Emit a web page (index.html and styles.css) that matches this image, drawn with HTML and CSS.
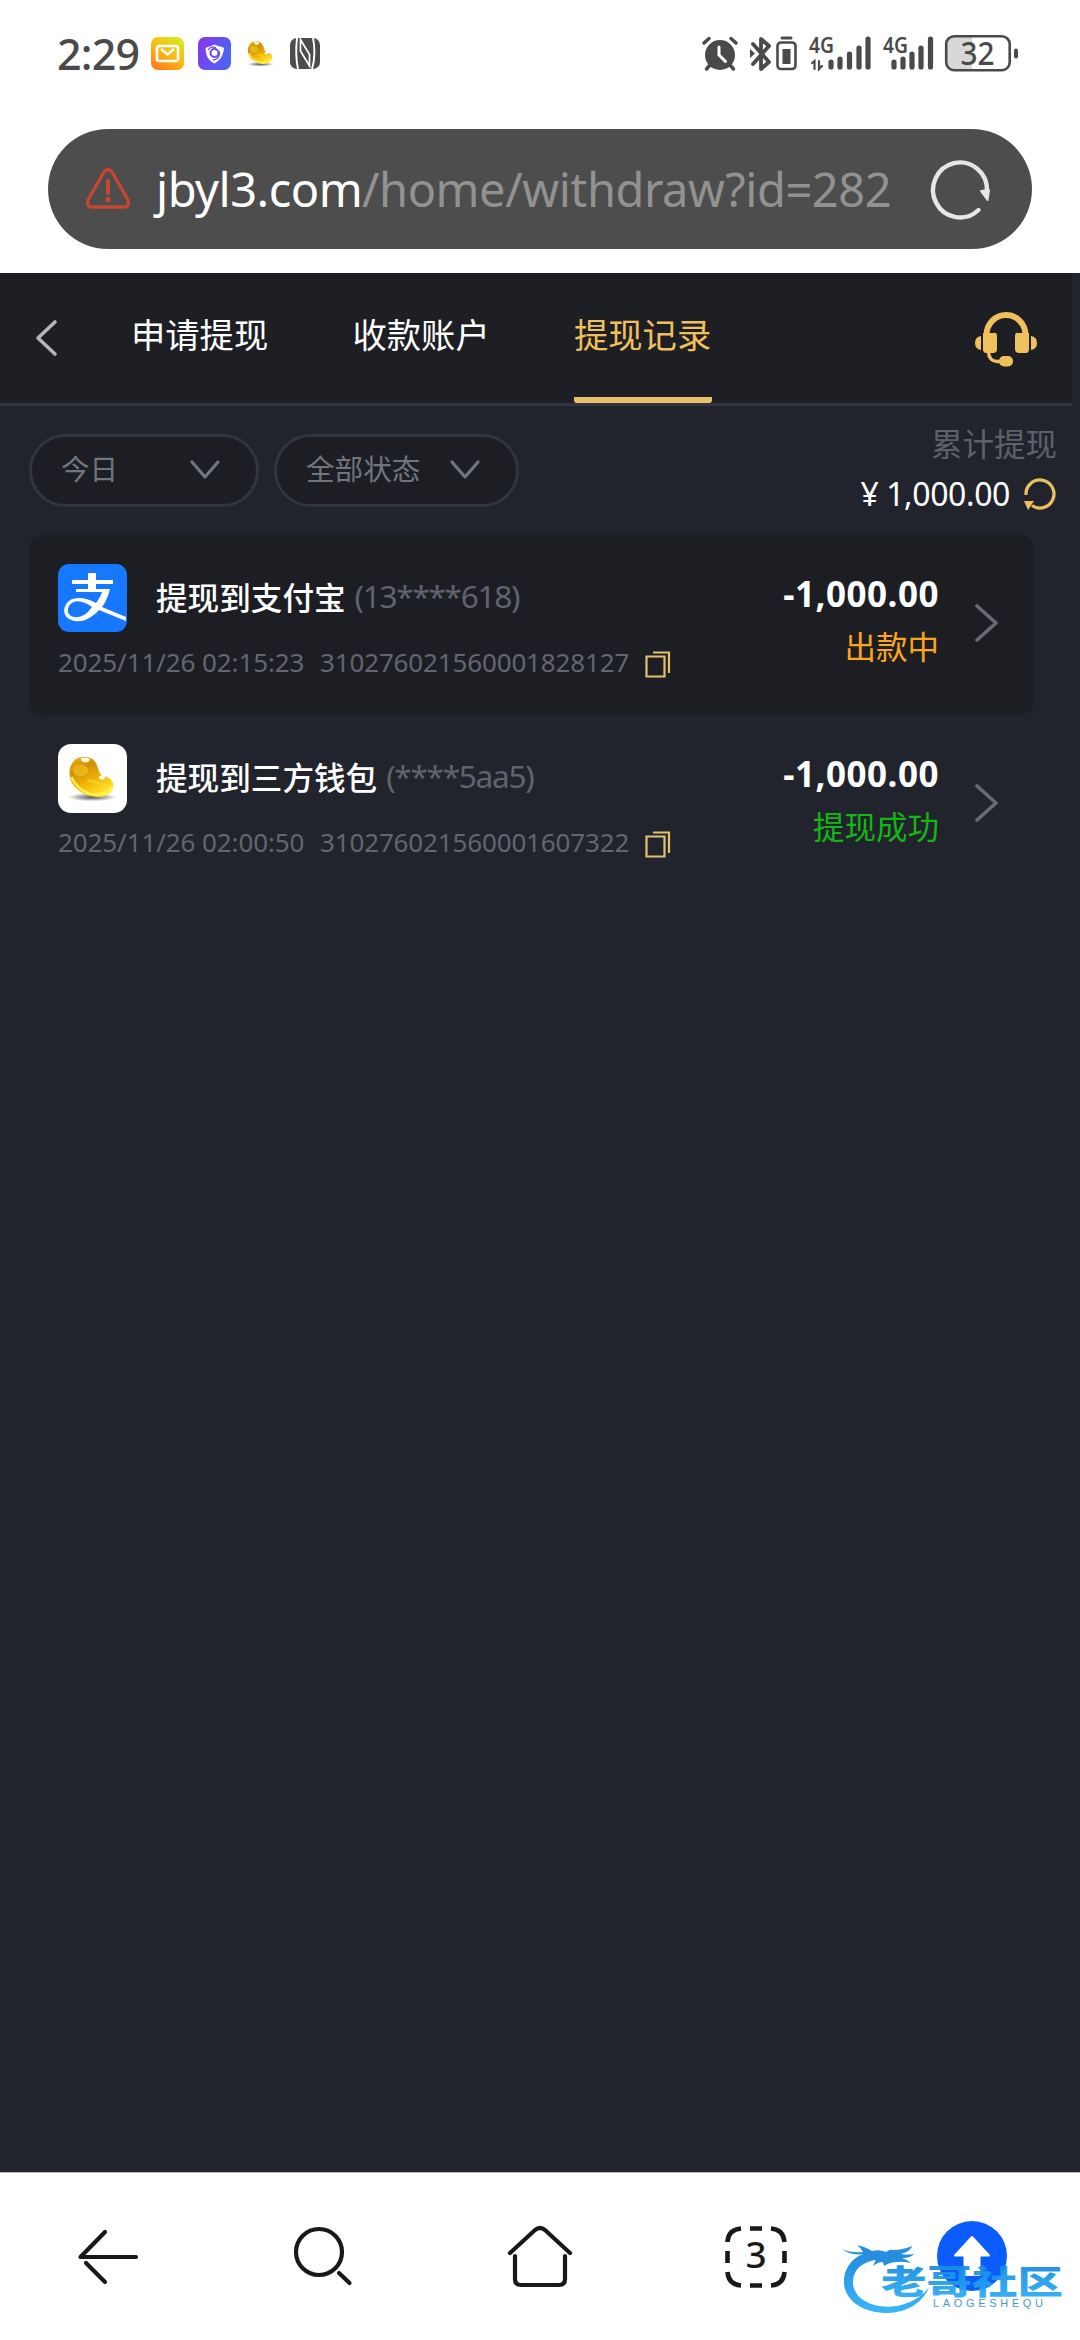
FILE: index.html
```html
<!DOCTYPE html>
<html lang="zh-CN">
<head>
<meta charset="utf-8">
<title>提现记录</title>
<link rel="stylesheet" href="styles.css">
</head>
<body>
<svg width="0" height="0" class="defs">
  <defs>
    <linearGradient id="gMail" x1="0.2" y1="1" x2="0.8" y2="0"><stop offset="0" stop-color="#ff7d1c"/><stop offset=".5" stop-color="#fdb913"/><stop offset="1" stop-color="#d8e821"/></linearGradient>
    <linearGradient id="gShield" x1="0" y1="0" x2="1" y2="0.4"><stop offset="0" stop-color="#8a35ea"/><stop offset="1" stop-color="#4b64f2"/></linearGradient>
    <linearGradient id="gBean" x1="0.1" y1="0" x2="0.6" y2="1"><stop offset="0" stop-color="#e9b012"/><stop offset=".3" stop-color="#cf9208"/><stop offset=".6" stop-color="#eeae06"/><stop offset="1" stop-color="#ffe92a"/></linearGradient>
    <linearGradient id="gMark" x1="0" y1="0" x2="0" y2="1"><stop offset="0" stop-color="#1283dc"/><stop offset="1" stop-color="#2bb0fa"/></linearGradient>
    <radialGradient id="gShadow"><stop offset="0" stop-color="#555"/><stop offset=".6" stop-color="#999" stop-opacity=".7"/><stop offset="1" stop-color="#ccc" stop-opacity="0"/></radialGradient>
    <symbol id="bean" viewBox="0 0 52 48">
      <ellipse cx="25" cy="43" rx="26" ry="4.500" fill="url(#gShadow)"/>
      <path d="M4 8C7 2 12 1 18 1C26 1 29 6 31 12C32 17 34 20 38 21.500C45 23 48 27 47 33C45 40 36 43.500 28 42.500C14 41 1.500 31 1.500 18C1.500 13 2 11 4 8Z" fill="url(#gBean)"/>
      <path d="M3.500 22C8 33 19 40 29 40C38 40 44 37 45.500 32" fill="none" stroke="#fff04a" stroke-width="2.600"/>
      <path d="M13 2.500C14 8 22 8 23 3C20 1.500 16 1.500 13 2.500Z" fill="#fffbd8"/>
      <ellipse cx="13" cy="15" rx="8" ry="6" fill="#f6c724" opacity=".6"/>
      <ellipse cx="35.500" cy="22.500" rx="3" ry="2.300" fill="#fffbe0"/>
      <path d="M20 26C27 24 31 31 41 30" fill="none" stroke="#ffd534" stroke-width="3" opacity=".6"/>
    </symbol>
    <symbol id="copy" viewBox="0 0 26 27"><path d="M1.500 5.500H19.500V25.500H1.500ZM8 1.500H24V22" fill="none" stroke="#e3bf6e" stroke-width="2.200"/></symbol>
    <symbol id="more" viewBox="0 0 24 40"><path d="M2 3L21 20L2 37" fill="none" stroke="#696b73" stroke-width="3.600" stroke-linecap="round" stroke-linejoin="round"/></symbol>
    <symbol id="down" viewBox="0 0 32 22"><path d="M3 3L16 18L29 3" fill="none" stroke="#71767e" stroke-width="3.200" stroke-linecap="round" stroke-linejoin="round"/></symbol>
  </defs>
</svg>

<header class="status">
  <span class="clock">2:29</span>
  <svg class="apps" width="172" height="36" viewBox="150 36 172 36">
    <rect x="151" y="37" width="33" height="33" rx="7" fill="url(#gMail)"/>
    <rect x="157" y="46" width="21" height="15" rx="2.500" fill="none" stroke="#fff" stroke-width="2.600"/><path d="M161 49L167.500 54.500L174 49" fill="none" stroke="#fff" stroke-width="2.400"/>
    <rect x="198" y="37" width="33" height="33" rx="7" fill="url(#gShield)"/>
    <path d="M214.500 44.500C219 47 222 46 224 48C223 57 220 60 214.500 63.500C208 60 206 56 205.500 48C209 46 210 47 214.500 44.500Z" fill="#fff"/><circle cx="214.500" cy="53" r="4" fill="none" stroke="#6e4aee" stroke-width="2"/><path d="M208 50C210 46 215 47 216 48M219 51C221 57 216 60 213 60" stroke="#6e4aee" fill="none" stroke-width="1.300"/>
    <use href="#bean" x="247" y="41" width="28" height="26"/>
    <rect x="290" y="38" width="30" height="31" rx="7" fill="#4c4c4c"/>
    <path d="M297 38C296 47 296 60 298 69M313 38C315 47 315 60 312 69" fill="none" stroke="#fff" stroke-width="1.900"/><path d="M300.500 39.500V51L309.500 66V54.500Z" fill="none" stroke="#fff" stroke-width="1.700"/>
  </svg>
  <svg class="signals" width="320" height="40" viewBox="700 33 320 40">
    <g fill="#4a4a4a" stroke="#4a4a4a" stroke-linecap="round">
      <circle cx="720" cy="55" r="15" stroke="none"/>
      <path d="M704 43L709 38.500M736 43L731 38.500M710 65L706.500 69M730 65L733.500 69" stroke-width="3.500"/>
      <path d="M719 47V55L725.500 61.500" fill="none" stroke="#fff" stroke-width="3"/>
      <path d="M753 44L769 62L761 69V39L769 46L753 64" fill="none" stroke-width="3.800" stroke-linejoin="round"/>
      <path d="M750 49L755 53.500L750 58Z" stroke="none"/>
      <rect x="777.500" y="42.500" width="18" height="26.500" rx="3.500" fill="none" stroke-width="2.600"/><path d="M782 38H791" stroke-width="3"/><rect x="782.500" y="49" width="8" height="15" stroke="none"/>
      <path d="M831 62V67M840 59V67M849.500 54V67M859 48V67M868 39V67M894 62V67M903 59V67M912 54V67M921 48V67M930.500 39V67" stroke-width="5.200"/>
      <path d="M812 63L814.500 61V69M819 61V69L822 66" fill="none" stroke-width="2.200"/>
    </g>
    <path d="M954 36.500H972V69.500H954Q946.500 69.500 946.500 62V44Q946.500 36.500 954 36.500Z" fill="#d8d8d8"/>
    <rect x="946.200" y="36.200" width="63.500" height="34" rx="8" fill="none" stroke="#4a4a4a" stroke-width="2.600"/><path d="M1016 50.500V56.500" stroke="#4a4a4a" stroke-width="4" stroke-linecap="round"/>
    <g class="net"><text x="809" y="53" textLength="25" lengthAdjust="spacingAndGlyphs">4G</text><text x="883" y="53" textLength="25" lengthAdjust="spacingAndGlyphs">4G</text></g>
    <text class="level" x="977.500" y="64.500" text-anchor="middle" textLength="34" lengthAdjust="spacingAndGlyphs">32</text>
  </svg>
</header>

<div class="address">
  <svg width="46" height="44" viewBox="0 0 46 44"><path d="M19 5Q23 0 27 5L43 33Q45 40 39 40H7Q1 40 3 33Z" fill="none" stroke="#c8452f" stroke-width="3.300"/><path d="M23 14V26" stroke="#c8452f" stroke-width="4" stroke-linecap="round"/><circle cx="23" cy="32.500" r="2.700" fill="#c8452f"/></svg>
  <div class="url"><span class="host">jbyl3.com</span><span class="path">/home/withdraw?id=282</span></div>
  <svg class="reload" width="64" height="64" viewBox="0 0 64 64"><path d="M50.500 53A27 27.500 0 1 1 59 34" fill="none" stroke="#e6e6e6" stroke-width="4.400" stroke-linecap="round"/><path d="M53 34L61 33L59.500 43Z" fill="#e6e6e6" stroke="#e6e6e6" stroke-width="2" stroke-linejoin="round"/></svg>
</div>

<main class="page">
  <nav class="tabs">
    <svg class="back" width="26" height="40" viewBox="0 0 26 40"><path d="M22 4L5 20L22 36" fill="none" stroke="#b4b6bb" stroke-width="3.600" stroke-linecap="round" stroke-linejoin="round"/></svg>
    <span class="tab">申请提现</span><span class="tab">收款账户</span><span class="tab active">提现记录</span>
    <svg class="support" width="62" height="56" viewBox="0 0 62 56"><path d="M11.500 26V24A19.500 20 0 0 1 50.500 24V26" fill="none" stroke="#f0c05c" stroke-width="6"/><g fill="#f0c05c"><path d="M8 22H18Q22 21 22 25V38Q22 42 18 42H11Q8 42 8 38ZM54 22H44Q40 21 40 25V38Q40 42 44 42H51Q54 42 54 38ZM6 25V39Q0 38 0 32T6 25ZM56 25V39Q62 38 62 32T56 25Z"/><rect x="24" y="45" width="14" height="10.500" rx="5"/></g><path d="M13.500 41Q14 50 22 50.500H27" fill="none" stroke="#f0c05c" stroke-width="3.400"/></svg>
  </nav>

  <section class="filters">
    <div class="pill day"><span>今日</span><svg width="32" height="22"><use href="#down"/></svg></div>
    <div class="pill state"><span>全部状态</span><svg width="32" height="22"><use href="#down"/></svg></div>
    <div class="total">
      <span class="label">累计提现</span>
      <div class="sum"><span class="value">¥ 1,000.00</span><svg width="34" height="34" viewBox="0 0 34 34"><path d="M3 18A14 14 0 1 1 9 28.500" fill="none" stroke="#e8c062" stroke-width="3.300"/><path d="M1 24L11 24L5 33Z" fill="#f0c05c"/></svg></div>
    </div>
  </section>

  <section class="list">
    <article class="record shaded">
      <svg class="logo" width="69" height="69" viewBox="0 0 69 69"><rect width="69" height="68" rx="11" fill="#1677ff"/><g fill="#fff"><path d="M30 9H38V16H55V20H38V25H52C50 33 47 39 44 43L68 53V57L41 46C32 56 23 58 17 57C5 55 3 44 11 37C18 32 28 34 38 39C41 35 43 31 44 28H18V25H30V20H14V16H30ZM34 43C25 36 15 35 11 42C7 50 14 54 20 53C27 52 31 47 34 43Z" fill-rule="evenodd"/></g></svg>
      <div class="info">
        <p class="title">提现到支付宝<span class="acct">(13****618)</span></p>
      </div>
      <div class="meta"><span class="date">2025/11/26 02:15:23</span><span class="order">310276021560001828127</span><svg width="26" height="27"><use href="#copy"/></svg></div>
      <div class="money"><b>-1,000.00</b><span class="pending">出款中</span></div>
      <svg class="go" width="24" height="40"><use href="#more"/></svg>
    </article>
    <article class="record">
      <svg class="logo" width="69" height="69" viewBox="0 0 69 69"><rect width="69" height="69" rx="13" fill="#fff"/><use href="#bean" x="10" y="12" width="50" height="46"/></svg>
      <div class="info">
        <p class="title">提现到三方钱包<span class="acct">(****5aa5)</span></p>
      </div>
      <div class="meta"><span class="date">2025/11/26 02:00:50</span><span class="order">310276021560001607322</span><svg width="26" height="27"><use href="#copy"/></svg></div>
      <div class="money"><b>-1,000.00</b><span class="done">提现成功</span></div>
      <svg class="go" width="24" height="40"><use href="#more"/></svg>
    </article>
  </section>
</main>

<footer class="toolbar">
  <svg viewBox="0 2172 216 168"><path d="M105 2232L80.500 2257H136M86 2263L105 2282" fill="none" stroke="#191919" stroke-width="4.200" stroke-linecap="round" stroke-linejoin="round"/></svg>
  <svg viewBox="216 2172 216 168"><circle cx="319" cy="2252" r="23" fill="none" stroke="#191919" stroke-width="4.200"/><path d="M339 2273L349.500 2283" stroke="#191919" stroke-width="4.200" stroke-linecap="round"/></svg>
  <svg viewBox="432 2172 216 168"><path d="M510 2253L535 2230Q540 2226 545 2230L570 2253M515 2256V2279Q515 2285 521 2285H559Q565 2285 565 2279V2256" fill="none" stroke="#191919" stroke-width="4.200" stroke-linecap="round"/></svg>
  <svg viewBox="648 2172 216 168"><path d="M727.500 2242V2241.500Q728.500 2229.500 741 2228.500M771 2228.500Q783.500 2229.500 784.500 2242M784.500 2272Q783.500 2284.500 771 2285.500M741 2285.500Q728.500 2284.500 727.500 2272M750 2228.500H762M750 2285.500H762M727.500 2251V2263M784.500 2251V2263" fill="none" stroke="#191919" stroke-width="4.600"/><text class="count" x="756" y="2268" text-anchor="middle">3</text></svg>
  <svg viewBox="864 2172 216 168"><circle cx="972" cy="2256" r="35" fill="#0b5cfb"/><path d="M972 2237L989 2255.500H979.500V2275H964.500V2255.500H955Z" fill="#fff" stroke="#fff" stroke-width="2" stroke-linejoin="round"/></svg>
  <svg class="watermark" width="236" height="110" viewBox="836 2210 236 110">
    <path d="M880 2251C856 2251 843 2266 844 2284C846 2302 864 2313 888 2313C909 2312 922 2302 929 2288C915 2304 894 2309 879 2306C862 2303 852 2293 853 2281C854 2268 864 2260 884 2259Z" fill="url(#gMark)"/>
    <path d="M842 2249Q850 2253 863 2252Q861 2248 857 2245Q866 2247 872 2251Q880 2249 886 2252Q890 2249 893 2250Q903 2250 912 2246Q911 2251 901 2254Q908 2255 914 2254Q911 2258 902 2258Q908 2260 911 2263Q903 2261 897 2262Q890 2262 884 2266L883 2262Q878 2262 873 2266L876 2259Q868 2257 860 2258Q864 2255 864 2254Q850 2256 842 2249Z" fill="#1686dc"/>
    <text class="mark" x="881" y="2293.500" textLength="182" lengthAdjust="spacingAndGlyphs">老哥社区</text>
    <text class="mark-sub" x="933" y="2307" textLength="110">LAOGESHEQU</text>
  </svg>
</footer>
</body>
</html>
```

FILE: styles.css
```css
* { box-sizing: border-box; }
body { margin: 0; width: 1080px; height: 2340px; display: flex; flex-direction: column; background: #fff; font-family: "Noto Sans", "Noto Sans CJK SC", sans-serif; overflow: hidden; }
svg { display: block; flex: none; overflow: visible; }
.defs { position: absolute; }
p { margin: 0; }

.status { height: 129px; padding: 32px 60px 0 57px; display: flex; align-items: flex-start; color: #4a4a4a; }
.clock { width: 93px; font: 500 43px/43px "Noto Sans", sans-serif; letter-spacing: -0.8px; white-space: nowrap; }
.apps { margin-top: 4px; }
.signals { margin: 1px 0 0 auto; }
.net { font: 600 22px "Noto Sans", sans-serif; fill: #4a4a4a; }
.level { font: 500 32px "Noto Sans", sans-serif; fill: #4a4a4a; }

.address { height: 120px; margin: 0 48px 24px; padding: 0 40px 0 37px; border-radius: 60px; background: #4d4d4d; display: flex; align-items: center; }
.url { margin-left: 25px; width: 739px; display: flex; font-size: 47px; line-height: 60px; white-space: nowrap; }
.host { width: 206px; color: #fff; letter-spacing: -0.5px; }
.path { color: #929292; letter-spacing: -0.45px; }
.reload { margin-left: auto; }

.page { flex: 1; background: #21242c; font-family: "Noto Sans CJK SC", sans-serif; }
.tabs { width: 1072px; height: 133px; padding: 0 35px 0 33px; background: #1e1f24; border-bottom: 3px solid #303440; display: flex; }
.back { margin: 45px 72px 0 0; }
.tab { height: 130px; width: 137.500px; margin-right: 84px; padding-top: 34px; font-size: 34.300px; line-height: 52px; color: #fff; white-space: nowrap; }
.active { margin-right: 0; color: #f0c05c; border-bottom: 6px solid #ebc06b; border-radius: 3px; }
.support { margin: 38px 0 0 auto; }

.filters { height: 129px; padding: 28px 23px 0 29px; display: flex; align-items: flex-start; }
.pill { height: 73px; border: 3px solid #303640; border-radius: 37px; background: #1d1e23; display: flex; align-items: center; justify-content: space-between; padding: 0 35px 4px 29px; color: #71757d; font-size: 28.600px; }
.pill span { margin-top: -2px; }
.pill svg { margin-top: 3px; }
.day { width: 230px; margin-right: 15px; }
.state { width: 245px; }
.total { margin-left: auto; margin-top: -14px; display: flex; flex-direction: column; align-items: flex-end; }
.label { font-size: 31.500px; line-height: 44px; color: #5d616a; }
.sum { margin-top: 8px; height: 44px; display: flex; align-items: center; gap: 13px; color: #fff; font: 32px/44px "Noto Sans", sans-serif; letter-spacing: -0.4px; }

.list { padding: 0 46px 0 29px; }
.record { height: 180px; padding: 29px 35px 0 29px; border-radius: 14px; display: grid; grid-template-columns: 98px 1fr auto 60px; grid-template-rows: 69px 60px; }
.shaded { background: #1d1e23; }
.info { padding-top: 9px; }
.title { display: flex; font-size: 31.600px; line-height: 46px; color: #fff; white-space: nowrap; font-weight: 500; }
.acct { margin-left: 9px; color: #5f636d; font: 31.600px/46px "Noto Sans", sans-serif; letter-spacing: -1.300px; }
.meta { grid-row: 2; grid-column: 1 / 3; display: flex; align-items: flex-start; padding-top: 11px; color: #62666f; font: 26px/36px "Noto Sans", sans-serif; white-space: nowrap; }
.date { width: 262px; letter-spacing: -0.1px; }
.order { width: 325px; letter-spacing: -0.15px; }
.meta svg { margin-top: 7px; }
.money { grid-column: 3; grid-row: 1 / 3; display: flex; flex-direction: column; align-items: flex-end; }
.money b { color: #fff; font: 700 35px/46px "Noto Sans", sans-serif; letter-spacing: 0.5px; margin-top: 7px; }
.money span { margin-top: 5px; font-size: 31.500px; line-height: 46px; }
.pending { color: #faa51e; }
.done { color: #14b514; }
.go { grid-column: 4; grid-row: 1 / 3; margin: 39px 0 0 auto; }

.toolbar { position: relative; height: 168px; border-top: 1px solid #b5b6ba; background: #fff; display: grid; grid-template-columns: repeat(5, 216px); }
.toolbar > svg { width: 216px; height: 168px; margin-top: -1px; }
.toolbar > .watermark { position: absolute; left: 836px; top: 38px; width: 236px; height: 110px; opacity: .93; }
.count { font: 500 37px "Noto Sans", sans-serif; fill: #191919; }
.mark { font: 900 33px "Noto Sans CJK SC", sans-serif; fill: url(#gMark); }
.mark-sub { font: 11px "Liberation Sans", sans-serif; fill: #3b91cf; }
```
